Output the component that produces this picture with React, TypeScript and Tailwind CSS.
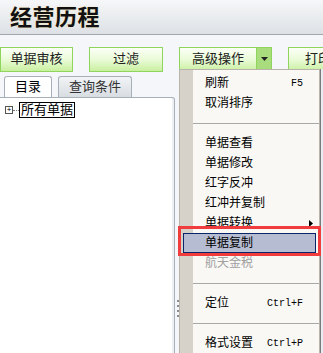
import { ReactNode } from 'react';

const CJK = "font-['Liberation_Sans','Noto_Sans_CJK_SC',sans-serif]";

function ToolButton({ label, width }: { label: string; width: string }) {
  return (
    <button
      type="button"
      className={[
        'flex h-[25px] shrink-0 items-center justify-center border border-[#8fd45c] bg-gradient-to-b from-[#fbfff6] via-[#eafbd8] to-[#c9ef9f] text-[13px] text-[#222]',
        width,
      ].join(' ')}
    >
      {label}
    </button>
  );
}

type Item = { label?: string; keys?: string; sep?: boolean; sub?: boolean; off?: boolean; hot?: boolean };

const ITEMS: Item[] = [
  { label: '刷新', keys: 'F5' },
  { label: '取消排序' },
  { sep: true },
  { label: '单据查看' },
  { label: '单据修改' },
  { label: '红字反冲' },
  { label: '红冲并复制' },
  { label: '单据转换', sub: true },
  { label: '单据复制', hot: true },
  { label: '航天金税', off: true },
  { sep: true },
  { label: '定位', keys: 'Ctrl+F' },
  { sep: true },
  { label: '格式设置', keys: 'Ctrl+P' },
];

function MenuRow({ item }: { item: Item }) {
  if (item.sep) {
    return (
      <div className="flex h-[20px] items-center pl-[13px]">
        <div className="h-px flex-1 bg-[#a8a8a8]" />
      </div>
    );
  }
  return (
    <div className="flex h-[20px] items-center px-[3px]">
      <div
        className={[
          'flex h-[20px] flex-1 items-center pl-[21px] pr-[12px] text-[12px]',
          item.hot ? 'border border-[#0a246a] bg-[#b6bdd2]' : 'border border-transparent',
          item.off ? 'text-[#a0a0a0]' : 'text-black',
        ].join(' ')}
      >
        <span className="flex-1">{item.label}</span>
        {item.keys && (
          <span className="font-['Liberation_Mono',monospace] text-[10px]">{item.keys}</span>
        )}
        {item.sub && (
          <svg width="4" height="7" viewBox="0 0 4 7" className="-mr-[10px]">
            <path d="M0 0l4 3.5L0 7z" fill="#000" />
          </svg>
        )}
      </div>
    </div>
  );
}

function Tab({ children, active }: { children: ReactNode; active?: boolean }) {
  return (
    <div
      className={[
        'flex h-[21px] items-center justify-center rounded-t-[3px] border border-b-0 border-[#a7b0ba] text-[13px]',
        active ? 'w-[48px] bg-white text-black' : 'w-[74px] bg-gradient-to-b from-[#f2f4f6] to-[#d8dde2] text-[#333]',
      ].join(' ')}
    >
      {children}
    </div>
  );
}

export default function App() {
  return (
    <div className={`relative h-[353px] w-[323px] overflow-hidden bg-[#f4f6f9] ${CJK}`}>
      <header className="flex h-[35px] items-center border-b border-[#a3a8ad] bg-gradient-to-b from-[#f6f7f9] to-[#dde1e5] pl-[10px]">
        <h1 className="m-0 text-[22px] font-bold tracking-[0.5px] text-[#111] [text-shadow:0_0_2px_#f5e6b0]">
          经营历程
        </h1>
      </header>

      <div className="flex h-[40px] items-center gap-[16px] pt-[8px]">
        <ToolButton label="单据审核" width="w-[73px]" />
        <ToolButton label="过滤" width="w-[74px]" />
        <div className="flex shrink-0">
          <ToolButton label="高级操作" width="w-[78px]" />
          <div className="flex h-[25px] w-[15px] items-center justify-center border border-l-0 border-[#8fd45c] bg-[#a9dc7c]">
            <svg width="7" height="4" viewBox="0 0 7 4">
              <path d="M0 0h7L3.5 4z" fill="#222" />
            </svg>
          </div>
        </div>
        <ToolButton label="打印" width="w-[60px]" />
      </div>

      <div className="flex gap-[6px] pl-[4px] pt-[1px]">
        <Tab active>目录</Tab>
        <Tab>查询条件</Tab>
      </div>
      <div className="h-[260px] w-[175px] rounded-tr-[3px] border border-l-0 border-[#a7b0ba] bg-white shadow-[inset_-2px_0_0_#eef1f4]">
        <div className="flex items-center pl-[5px] pt-[4px]">
          <span className="flex h-[8px] w-[8px] items-center justify-center border border-[#555] bg-white text-[8px] leading-none">
            +
          </span>
          <span className="w-[6px] border-t border-dotted border-[#777]" />
          <span className="border border-black px-[1px] text-[13px] leading-[14px] text-black">所有单据</span>
        </div>
      </div>

      <div className="absolute left-[177px] top-[300px] flex flex-col gap-[3px]">
        <span className="h-[2px] w-[2px] bg-[#8a8e94]" />
        <span className="h-[2px] w-[2px] bg-[#8a8e94]" />
        <span className="h-[2px] w-[2px] bg-[#8a8e94]" />
        <span className="h-[2px] w-[2px] bg-[#8a8e94]" />
      </div>

      <div className="absolute left-[320px] top-[69px] h-[284px] w-[3px] border-l border-[#7a7a7a] bg-[#e9edf2]" />

      <div className="absolute left-[179px] top-[69px] w-[141px] border border-[#b8b4ac] bg-[#f9f8f5] py-[3px]">
        <div className="absolute bottom-0 left-0 top-0 w-[13px] bg-[#d6d2ca]" />
        <div className="relative">
          {ITEMS.map((it, i) => (
            <MenuRow key={i} item={it} />
          ))}
        </div>
      </div>

      <div className="pointer-events-none absolute left-[178px] top-[226px] h-[30px] w-[143px] border-[3px] border-[#f03c3c]" />
    </div>
  );
}
